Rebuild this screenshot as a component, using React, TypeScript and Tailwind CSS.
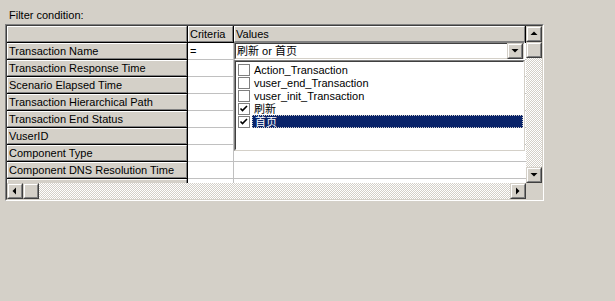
import React from "react";

const rows = [
  "Transaction Name",
  "Transaction Response Time",
  "Scenario Elapsed Time",
  "Transaction Hierarchical Path",
  "Transaction End Status",
  "VuserID",
  "Component Type",
  "Component DNS Resolution Time",
  "",
];

const items = [
  { label: "Action_Transaction", checked: false },
  { label: "vuser_end_Transaction", checked: false },
  { label: "vuser_init_Transaction", checked: false },
  { label: "刷新", checked: true },
  { label: "首页", checked: true, selected: true },
];

const font = "font-['Liberation_Sans','Noto_Sans_CJK_SC',sans-serif] text-[11px] leading-[13px]";
const checker =
  "bg-[image:repeating-conic-gradient(#d4d0c8_0_25%,#ffffff_0_50%)] bg-[length:2px_2px]";

// raised win2000 style button with an arrow
const ScrollButton = ({ dir }: { dir: "up" | "down" | "left" | "right" }) => {
  const points = {
    up: "4.5,9 11.5,9 8,5.5",
    down: "4.5,6 11.5,6 8,9.5",
    left: "9,4.5 9,11.5 5.5,8",
    right: "6,4.5 6,11.5 9.5,8",
  }[dir];
  return (
    <div className="w-4 h-4 shrink-0 border border-t-[#d4d0c8] border-l-[#d4d0c8] border-r-[#404040] border-b-[#404040] bg-[#d4d0c8]">
      <div className="w-full h-full border border-t-white border-l-white border-r-[#808080] border-b-[#808080] relative">
        <svg width="16" height="16" viewBox="0 0 16 16" className="absolute -left-[2px] -top-[2px]">
          <polygon points={points} fill="#000" />
        </svg>
      </div>
    </div>
  );
};

const Thumb = () => (
  <div className="w-4 h-4 shrink-0 border border-t-[#d4d0c8] border-l-[#d4d0c8] border-r-[#404040] border-b-[#404040] bg-[#d4d0c8]">
    <div className="w-full h-full border border-t-white border-l-white border-r-[#808080] border-b-[#808080]" />
  </div>
);

const HeaderCell = ({ children, className }: { children?: React.ReactNode; className: string }) => (
  <div className={`${className} h-full shrink-0 border-r border-b border-black bg-[#d4d0c8]`}>
    <div className="h-full border border-t-white border-l-white border-r-[#808080] border-b-[#808080] pl-[1px] pt-[1px] flex items-center whitespace-nowrap overflow-hidden">
      {children}
    </div>
  </div>
);

const CheckBox = ({ checked }: { checked: boolean }) => (
  <div className="w-[12px] h-[12px] shrink-0 border border-[#808080] bg-white relative">
    {checked && (
      <svg width="10" height="10" viewBox="0 0 10 10" className="absolute left-0 top-0">
        <path d="M1.5 4.5 L3.5 6.5 L8 2" stroke="#000" strokeWidth="1.6" fill="none" />
      </svg>
    )}
  </div>
);

const App = () => {
  return (
    <div className={`w-[615px] h-[301px] bg-[#d4d0c8] text-black ${font}`}>
      <div className="pt-[9px] pl-[9px]">Filter condition:</div>

      <div className="ml-[5px] mt-[2px] w-[539px] h-[177px] border border-t-[#808080] border-l-[#808080] border-r-white border-b-white">
        <div className="w-full h-full border border-t-[#404040] border-l-[#404040] border-r-[#d4d0c8] border-b-[#d4d0c8] flex flex-col">
          <div className="flex h-[157px]">
            {/* grid */}
            <div className="relative flex-1 overflow-hidden bg-white">
              <div className="flex h-[17px]">
                <HeaderCell className="w-[181px]" />
                <HeaderCell className="w-[46px]">Criteria</HeaderCell>
                <HeaderCell className="flex-1">Values</HeaderCell>
              </div>
              {rows.map((r, i) => (
                <div key={i} className="flex h-[17px]">
                  <HeaderCell className="w-[181px]">{r}</HeaderCell>
                  <div className="w-[46px] shrink-0 border-r border-b border-[#c0c0c0] pl-[2px] flex items-center">
                    {i === 0 ? "=" : ""}
                  </div>
                  <div className="flex-1 border-b border-[#c0c0c0]" />
                </div>
              ))}

              {/* combobox editing Values */}
              <div className="absolute left-[227px] top-[16px] w-[291px] h-[18px] border border-t-[#808080] border-l-[#808080] border-r-white border-b-white">
                <div className="w-full h-full border border-t-[#404040] border-l-[#404040] border-r-[#d4d0c8] border-b-[#d4d0c8] bg-white flex items-center">
                  <span className="flex-1 pl-[1px] pt-[1px] whitespace-nowrap">刷新 or 首页</span>
                  <ScrollButton dir="down" />
                </div>
              </div>

              {/* dropdown list */}
              <div className="absolute left-[227px] top-[34px] w-[291px] h-[91px] border border-t-[#808080] border-l-[#808080] border-r-[#d4d0c8] border-b-[#d4d0c8]">
                <div className="w-full h-full border border-t-[#404040] border-l-[#404040] border-r-white border-b-white bg-white pt-[1px]">
                  {items.map((it) => (
                    <div key={it.label} className="flex items-center h-[13px] pl-[2px]">
                      <CheckBox checked={it.checked} />
                      <div
                        className={`flex-1 h-[13px] ml-[2px] pl-[2px] pt-[1px] flex items-center whitespace-nowrap ${
                          it.selected ? "bg-[#0a246a] text-white border border-dotted border-[#d4d0c8]" : ""
                        }`}
                      >
                        {it.label}
                      </div>
                    </div>
                  ))}
                </div>
              </div>
            </div>

            {/* vertical scrollbar */}
            <div className="w-4 flex flex-col">
              <ScrollButton dir="up" />
              <Thumb />
              <div className={`flex-1 ${checker}`} />
              <ScrollButton dir="down" />
            </div>
          </div>

          {/* horizontal scrollbar */}
          <div className="flex h-4">
            <ScrollButton dir="left" />
            <Thumb />
            <div className={`flex-1 ${checker}`} />
            <ScrollButton dir="right" />
            <div className="w-4 bg-[#d4d0c8]" />
          </div>
        </div>
      </div>
    </div>
  );
};

export default App;
